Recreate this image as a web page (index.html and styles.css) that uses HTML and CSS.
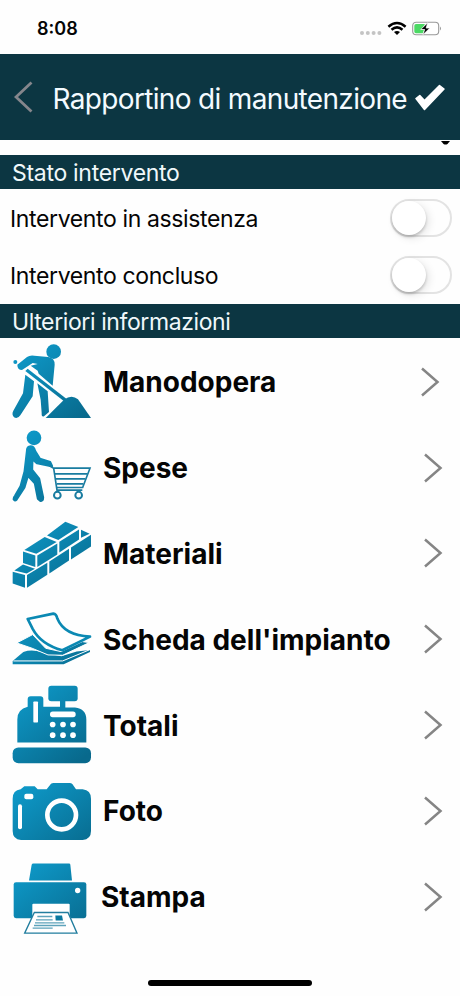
FILE: index.html
```html
<!DOCTYPE html>
<html lang="it">
<head>
  <meta charset="UTF-8">
  <meta name="viewport" content="width=device-width, initial-scale=1">
  <title>Rapportino di manutenzione</title>
  <link rel="stylesheet" href="styles.css">
</head>
<body>

  <!-- Barra di stato -->
  <div class="status-bar">
    <span class="ora">8:08</span>
    <svg class="status-icons" width="84" height="18" viewBox="0 0 84 18">
      <g fill="#c4c4c4">
        <circle cx="4" cy="13" r="2"/><circle cx="9.8" cy="13" r="2"/><circle cx="15.6" cy="13" r="2"/><circle cx="21.4" cy="13" r="2"/>
      </g>
      <g fill="none" stroke="#000" stroke-width="2.5">
        <path d="M30.4 6.8Q39 -.7 47.6 6.8"/>
        <path d="M33.5 9.8Q39 5 44.5 9.8"/>
      </g>
      <path d="M36 12.1Q39 9.7 42 12.1L39 15z"/>
      <rect x="54.7" y="2.2" width="26" height="12.6" rx="3.5" fill="#fff" stroke="#999" stroke-width="1.1"/>
      <path d="M58 4h9l-4 6h3l-1.3 3.2H58a1.7 1.7 0 0 1-1.7-1.7V5.7A1.7 1.7 0 0 1 58 4z" fill="#4cd964"/>
      <path d="M69.7 2.8L62.7 9.5h4l-1.8 5.2 6.9-6.6h-3.7z" stroke="#fff" stroke-width=".7"/>
      <path d="M82 6.4q2 2 0 4.2z" fill="#999"/>
    </svg>
  </div>

  <!-- Intestazione -->
  <header class="header">
    <svg class="indietro" width="20" height="34" viewBox="0 0 20 34"><path d="M17.5 2.5L2 17l15.500 14.500" fill="none" stroke="#85868c" stroke-width="2.8"/></svg>
    <h1>Rapportino di manutenzione</h1>
    <svg class="conferma" width="30" height="27" viewBox="0 0 30 27"><path d="M1 14.600L4.800 11.500l4.700 5L24.500 1.500l4.500 3.500L9.500 25.500z" fill="#fff" stroke="#fff" stroke-width="1.500" stroke-linejoin="round"/></svg>
  </header>

  <!-- Parte finale del campo precedente -->
  <div class="campo-precedente">
    <svg width="10" height="4" viewBox="0 0 10 4"><path d="M0 0h9L6.500 3q-2 1-4 0z"/></svg>
  </div>

  <h2 class="sezione">Stato intervento</h2>
  <label class="opzione"><span>Intervento in assistenza</span><input type="checkbox" class="switch"></label>
  <label class="opzione"><span>Intervento concluso</span><input type="checkbox" class="switch"></label>

  <h2 class="sezione ulteriori">Ulteriori informazioni</h2>

  <nav class="menu">
    <a class="voce manodopera">
      <svg class="icona" viewBox="0 3 276 257.400" fill="url(#blu)">
        <!-- sfumatura comune a tutte le icone -->
        <defs>
          <linearGradient id="blu" gradientUnits="userSpaceOnUse" x1="60" y1="20" x2="240" y2="250">
            <stop offset="0" stop-color="#0e9bcb"/>
            <stop offset="1" stop-color="#08698c"/>
          </linearGradient>
        </defs>
        <circle cx="161" cy="41" r="22"/>
        <circle cx="46" cy="72" r="6"/>
        <path d="M52 80L81 57Q89 51 103 53L145 57Q165 61 164 80L158 143 116 107 113 98 92 83 113 78 98 75 66 96Q52 96 52 80z"/>
        <path d="M76 99L83 92 201 184 196 193z"/>
        <path d="M76 110L102 130 98 175 61 232Q53 244 42 238 34 229 40 218L69 166z"/>
        <path d="M112 136L143 160 147 222 132 235Q124 238 125 225L122 185z"/>
        <path d="M137 240L192 185Q215 168 234 184L273 240z"/>
      </svg>
      <span>Manodopera</span>
      <svg class="freccia" viewBox="0 0 20 32"><path d="M2 2.500L17.500 16 2 29.500"/></svg>
    </a>
    <a class="voce">
      <svg class="icona" viewBox="0 2.400 276 257.400" fill="url(#blu)">
        <circle cx="102" cy="41" r="22"/>
        <path d="M80 82Q80 66 92 66 102 66 106 80L120 103 151 113 157 126 147 125 111 118 98 106 97 137 118 163 130 220Q130 233 120 230L113 224 104 178 84 156 74 190 50 227Q44 233 40 225 39 221 45 214L61 186 73 142z" stroke="url(#blu)" stroke-width="5" stroke-linejoin="round"/>
        <g fill="none" stroke="#197ca0" stroke-width="5">
          <path d="M148 125l13 7 10 66h76M161 132h109l-22 58h-76"/>
          <path d="M165 149h97M168 164h88M171 179h79"/>
          <circle cx="172" cy="213" r="10" stroke-width="6"/>
          <circle cx="236" cy="213" r="10" stroke-width="6"/>
        </g>
      </svg>
      <span>Spese</span>
      <svg class="freccia" viewBox="0 0 20 32"><path d="M2 2.500L17.500 16 2 29.500"/></svg>
    </a>
    <a class="voce">
      <svg class="icona" viewBox="0 1.800 276 257.400" fill="url(#blu)">
        <path d="M73 119L134 80 170 95 109 130z"/>
        <path d="M141 75L196 34 235 50 175 89z"/>
        <path d="M69 123L106 135V170L69 158z"/>
        <path d="M112 135L172 99V132L112 170z"/>
        <path d="M178 94L237 57V87L178 126z"/>
        <path d="M243 58L269 70 243 82z"/>
        <path d="M43 180L69 162 105 175 80 189z"/>
        <path d="M38 184L75 194V232L38 219z"/>
        <path d="M81 194L142 157V193L81 232z"/>
        <path d="M148 153L207 115V150L148 189z"/>
        <path d="M213 111L273 73V108L213 147z"/>
      </svg>
      <span>Materiali</span>
      <svg class="freccia" viewBox="0 0 20 32"><path d="M2 2.500L17.500 16 2 29.500"/></svg>
    </a>
    <a class="voce">
      <svg class="icona" viewBox="0 -10.800 276 257.400" fill="url(#blu)">
        <path d="M38 184L70 157Q96 148 125 158L184 170 230 156 270 151V157L191 194H38z"/>
        <path d="M40 184h148l82-34" fill="none" stroke="#fff" stroke-width="3"/>
        <path d="M50 130L98 105 137 146 183 156 247 126 268 129 188 167 144 166Q96 144 50 130z" stroke="#fff" stroke-width="3"/>
        <path d="M83 58L160 42Q169 43 172 57 193 108 270 111L187 152Q123 135 98 88z" fill="#fff" stroke="#0b89b3" stroke-width="8" stroke-linejoin="round"/>
      </svg>
      <span>Scheda dell'impianto</span>
      <svg class="freccia" viewBox="0 0 20 32"><path d="M2 2.500L17.500 16 2 29.500"/></svg>
    </a>
    <a class="voce">
      <svg class="icona" viewBox="0 12.600 276 257.400" fill="url(#blu)">
        <rect x="145" y="24" width="88" height="46" rx="9"/>
        <path d="M180 68h16v21h29q34 4 34 36v69H52v-69q0-31 31-38V64q0-9 9-9h29q9 0 9 9v23h50z"/>
        <rect x="38" y="209" width="235" height="47" rx="17"/>
        <g fill="#fff">
          <rect x="100" y="71" width="14" height="63" rx="2"/>
          <rect x="150" y="101" width="77" height="17" rx="8"/>
          <circle cx="158" cy="140" r="8.500"/><circle cx="189" cy="140" r="8.500"/><circle cx="219" cy="140" r="8.500"/>
          <circle cx="158" cy="172" r="8.500"/><circle cx="189" cy="172" r="8.500"/><circle cx="219" cy="172" r="8.500"/>
        </g>
      </svg>
      <span>Totali</span>
      <svg class="freccia" viewBox="0 0 20 32"><path d="M2 2.500L17.500 16 2 29.500"/></svg>
    </a>
    <a class="voce">
      <svg class="icona" viewBox="0 -21 276 257.400" fill="url(#blu)">
        <path d="M62 43L73 34h31l9 9h27l13-17q3-2 8-2h48q5 0 8 3l11 16h20q25 3 25 28v97q0 25-25 27H63q-25-2-25-27V71q0-25 24-28z"/>
        <circle cx="185" cy="120" r="43" fill="none" stroke="#fff" stroke-width="14"/>
        <g fill="#fff">
          <rect x="73" y="56" width="27" height="17" rx="6"/>
          <rect x="54" y="88" width="12" height="75" rx="6"/>
        </g>
      </svg>
      <span>Foto</span>
      <svg class="freccia" viewBox="0 0 20 32"><path d="M2 2.500L17.500 16 2 29.500"/></svg>
    </a>
    <a class="voce stampa">
      <svg class="icona" viewBox="0 -3.600 276 257.400" fill="url(#blu)">
        <path d="M100 25h107q4 0 4 4l5 47H87l8-47q1-4 5-4z"/>
        <rect x="41" y="81" width="218" height="108" rx="7"/>
        <circle cx="233" cy="106" r="8" fill="#fff"/>
        <rect x="97" y="146" width="112" height="44" rx="3" fill="#fff"/>
        <path d="M103 172h101l27 62H74z" fill="#fff" stroke="#217d9e" stroke-width="4"/>
        <path d="M166 181h20l3 15h-22z"/>
        <g stroke="#5da3bb" stroke-width="4">
          <path d="M112 184h45M108 194h50"/>
          <path d="M105 203h88M102 211h96M98 219h60"/>
        </g>
      </svg>
      <span>Stampa</span>
      <svg class="freccia" viewBox="0 0 20 32"><path d="M2 2.500L17.500 16 2 29.500"/></svg>
    </a>
  </nav>

  <div class="home-indicator"></div>

</body>
</html>
```
FILE: styles.css
```css
* {
  box-sizing: border-box;
}

body {
  margin: 0;
  height: 996px;
  display: flex;
  flex-direction: column;
  overflow: hidden;
  background-color: #fefefe;
  color: #050505;
  font-family: Inter, Roboto, sans-serif;
}

h1, h2 {
  margin: 0;
  font-weight: 400;
  white-space: nowrap;
}

.status-bar {
  display: flex;
  justify-content: space-between;
  align-items: center;
  height: 54px;
  padding: 3px 18px 0 37px;
}

.ora {
  font-size: 18px;
  font-weight: 600;
}

.header {
  display: flex;
  align-items: center;
  height: 86px;
  padding: 0 14px;
  background-color: #0c3642;
  color: #f4fbff;
}

.header h1 {
  flex: 0 0 381px;
  padding: 3px 0 0 18.5px;
  font-size: 28px;
  letter-spacing: -0.66px;
}

.conferma {
  flex-shrink: 0;
}

.campo-precedente {
  display: flex;
  justify-content: flex-end;
  height: 15px;
  padding: 1px 9px 0 0;
}

.sezione {
  height: 34px;
  padding-left: 12px;
  background-color: #0c3642;
  color: #f0f8fa;
  font-size: 23px;
  letter-spacing: -0.3px;
  line-height: 36px;
}

.opzione {
  display: flex;
  justify-content: space-between;
  align-items: center;
  height: 57.5px;
  padding: 0 8px 0 10px;
  font-size: 23px;
  letter-spacing: -0.37px;
}

.opzione span {
  padding-top: 2px;
}

.switch {
  appearance: none;
  display: flex;
  width: 62px;
  height: 38px;
  margin: 0;
  border: 2px solid #e3e3e3;
  border-radius: 19px;
}

.switch::before {
  content: "";
  width: 34px;
  height: 34px;
  border-radius: 50%;
  background-color: #fff;
  box-shadow: 0 2px 3px rgba(0,0,0,0.2), 3px 3px 9px rgba(0,0,0,0.1);
}

.ulteriori {
  letter-spacing: -0.4px;
}

.menu {
  padding-top: 1px;
}

.voce {
  display: flex;
  align-items: center;
  height: 85.8px;
  padding-right: 17px;
  font-size: 28px;
  font-weight: 700;
}

.voce span {
  flex: 1;
  padding: 1px 0 0 11px;
  white-space: nowrap;
}

.icona {
  width: 92px;
  height: 85.8px;
}

.freccia {
  width: 20px;
  height: 32px;
  fill: none;
  stroke: #858585;
  stroke-width: 2.5;
}

.manodopera {
  padding-right: 20px;
}

.stampa span {
  padding-left: 9px;
}

.home-indicator {
  width: 164px;
  height: 6px;
  margin: 40px auto 0;
  border-radius: 3px;
  background-color: #000;
}
```
